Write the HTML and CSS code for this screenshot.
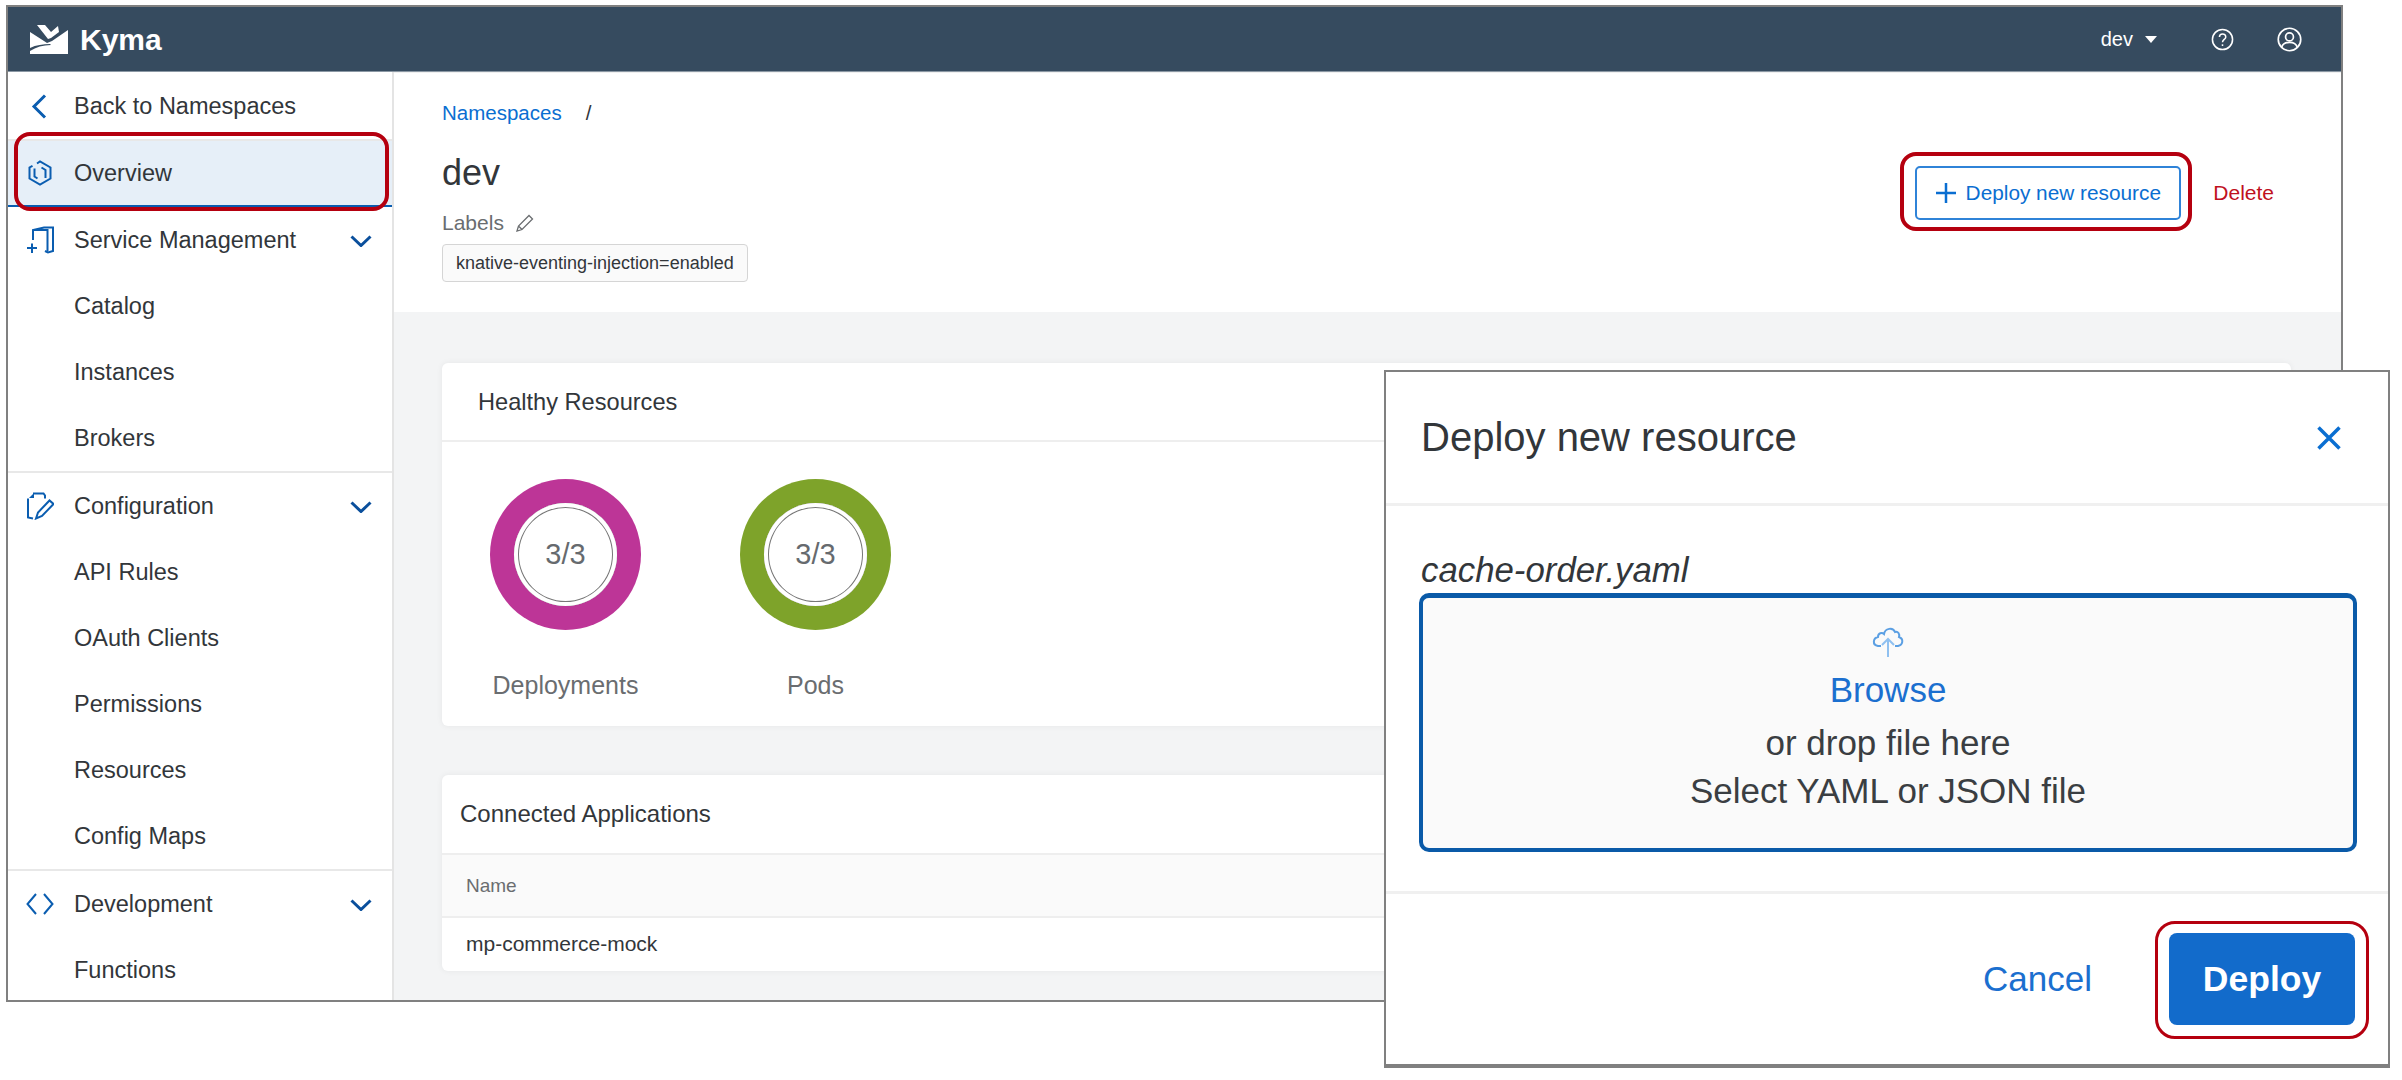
FILE: index.html
```html
<!DOCTYPE html>
<html>

<head>
    <meta charset="UTF-8">
    <title>Kyma</title>
    <link rel="stylesheet" href="styles.css">
</head>

<body>
    <div class="app">
        <header class="topbar">
            <div class="brand">
                <svg class="logo" viewBox="0 0 38 30">
                    <path fill="#fff" d="M7 1l8 0 6 7 7-6 1 6-8 6-3 1z"/>
                    <path fill="#fff" d="M0 8l14 9 3 2 5-2L38 6v24H0v-3c6-4 13-6 21-6l-1-1C13 20 6 21 0 24z"/>
                </svg>
                <span class="brand-name">Kyma</span>
            </div>
            <div class="topbar-right">
                <span class="ns-select">dev<i class="caret"></i></span>
                <svg class="top-icon help" viewBox="0 0 24 24">
                    <circle cx="12" cy="12" r="10.5"/>
                    <path d="M8.8 9.5c0-4.3 6.6-4.3 6.6-.2 0 2.600-3.400 2.700-3.400 5.600"/>
                    <path d="M12 17v1.800"/>
                </svg>
                <svg class="top-icon user" viewBox="0 0 24 24">
                    <circle cx="12" cy="12" r="10.8"/>
                    <circle cx="12" cy="9.500" r="3.800"/>
                    <path d="M4.500 19.500c1-3.600 4-4.800 7.500-4.800s6.500 1.200 7.500 4.800"/>
                </svg>
            </div>
        </header>

        <div class="columns">
            <nav class="sidebar">
                <div class="group">
                    <a class="row">
                        <svg class="nav-icon back" viewBox="0 0 28 28"><path d="M19 3.500L8 14.500l11 11"/></svg>
                        Back to Namespaces
                    </a>
                    <a class="row active">
                        <svg class="nav-icon" viewBox="0 0 28 28">
                            <path d="M11 4.500L14 2.500l10.500 6v11L14 25.500l-10.500-6v-11l3-1.700"/>
                            <path d="M8.500 9.500v8l3 2M19.500 19v-8l-4-2.500"/>
                        </svg>
                        Overview
                        <span class="callout callout-overview"></span>
                    </a>
                    <a class="row">
                        <svg class="nav-icon" viewBox="0 0 28 28">
                            <path d="M7 14V4l11-2.500h1.500L27 1.500V25l-5 1.500-3-1.500"/>
                            <path d="M7 4h14.500v21"/>
                            <path d="M1 22h10M6 17.500V27"/>
                        </svg>
                        Service Management
                        <svg class="chev" viewBox="0 0 22 12"><path d="M1.500 1.500L11 10.500l9.500-9"/></svg>
                    </a>
                    <a class="row sub">Catalog</a>
                    <a class="row sub">Instances</a>
                    <a class="row sub">Brokers</a>
                </div>
                <div class="group">
                    <a class="row">
                        <svg class="nav-icon" viewBox="0 0 28 28">
                            <path d="M7 1.500h10.500l1.500 2v3"/>
                            <path d="M2 6.500v19l5 1"/>
                            <path fill="#0a5db0" stroke="none" d="M3 6l5-5v5z"/>
                            <path d="M10 26.500l2-6L23.500 8.500l4 3.500L16 24z"/>
                        </svg>
                        Configuration
                        <svg class="chev" viewBox="0 0 22 12"><path d="M1.500 1.500L11 10.500l9.500-9"/></svg>
                    </a>
                    <a class="row sub">API Rules</a>
                    <a class="row sub">OAuth Clients</a>
                    <a class="row sub">Permissions</a>
                    <a class="row sub">Resources</a>
                    <a class="row sub">Config Maps</a>
                </div>
                <div class="group">
                    <a class="row">
                        <svg class="nav-icon" viewBox="0 0 28 28">
                            <path d="M10 4L1.500 14 10 24M18 4l8.500 10L18 24"/>
                        </svg>
                        Development
                        <svg class="chev" viewBox="0 0 22 12"><path d="M1.500 1.500L11 10.500l9.500-9"/></svg>
                    </a>
                    <a class="row sub">Functions</a>
                </div>
            </nav>

            <main class="content">
                <section class="page-head">
                    <div>
                        <div class="crumbs"><a>Namespaces</a><span class="slash">/</span></div>
                        <h1 class="ns-title">dev</h1>
                        <div class="labels">
                            Labels
                            <svg class="pencil" viewBox="0 0 20 20">
                                <path d="M2 18l1.500-5L14 2.500l3.500 3.500L7 16.500zM3.500 13L7 16.500"/>
                            </svg>
                        </div>
                        <span class="tag">knative-eventing-injection=enabled</span>
                    </div>
                    <div class="actions">
                        <button class="btn-outline">
                            <svg class="plus" viewBox="0 0 20 20"><path d="M10 0v20M0 10h20"/></svg>
                            Deploy new resource
                            <span class="callout callout-deploy"></span>
                        </button>
                        <a class="delete">Delete</a>
                    </div>
                </section>

                <section class="card health">
                    <div class="card-head">Healthy Resources</div>
                    <div class="donuts">
                        <div class="donut-item">
                            <div class="donut magenta"><span class="donut-hole">3/3</span></div>
                            <div class="donut-label">Deployments</div>
                        </div>
                        <div class="donut-item">
                            <div class="donut green"><span class="donut-hole">3/3</span></div>
                            <div class="donut-label">Pods</div>
                        </div>
                    </div>
                </section>

                <section class="card apps">
                    <div class="card-head apps-head">Connected Applications</div>
                    <table class="apps-table">
                        <tr><th>Name</th></tr>
                        <tr><td>mp-commerce-mock</td></tr>
                    </table>
                </section>
            </main>
        </div>
    </div>

    <div class="modal">
        <div class="modal-head">
            <span>Deploy new resource</span>
            <svg class="close" viewBox="0 0 24 24"><path d="M1.500 1.500l21 21M22.500 1.500l-21 21"/></svg>
        </div>
        <div class="modal-body">
            <div class="file-name">cache-order.yaml</div>
            <div class="dropzone">
                <svg class="upload" viewBox="0 0 32 32">
                    <path d="M9 20H6c-6-1-5-8 0-9 0-4 4-5 6-3 1-6 9-7 11-2 3-1 5 2 4 5 5 2 4 8-1 9h-3"/>
                    <path class="upload-arrow" d="M16 31V13M10 19l6-6 6 6"/>
                </svg>
                <a class="browse">Browse</a>
                <div class="drop-text drop-first">or drop file here</div>
                <div class="drop-text">Select YAML or JSON file</div>
            </div>
        </div>
        <div class="modal-foot">
            <a class="cancel">Cancel</a>
            <button class="btn-primary">
                Deploy
                <span class="callout callout-primary"></span>
            </button>
        </div>
    </div>
</body>
</html>
```

FILE: styles.css
```css
* {
    box-sizing: border-box;
    font-family: "Liberation Sans", Arial, sans-serif;
}
body {
    margin: 0;
    background: #fff;
    color: #32363a;
}
.app {
    width: 2337px;
    height: 997px;
    margin: 5px 0 0 6px;
    border: 2px solid #808080;
    overflow: hidden;
}
.topbar {
    height: 65px;
    display: flex;
    align-items: center;
    justify-content: space-between;
    background: #364b5f;
    border-bottom: 1px solid #8b98a4;
    color: #fff;
}
.brand {
    display: flex;
    align-items: center;
    margin-left: 22px;
}
.logo {
    width: 38px;
    height: 30px;
}
.brand-name {
    margin: 2px 0 0 12px;
    font-size: 30px;
    font-weight: bold;
}
.topbar-right {
    display: flex;
    align-items: center;
    margin-right: 39px;
}
.ns-select {
    font-size: 20px;
    display: flex;
    align-items: center;
}
.caret {
    width: 0;
    height: 0;
    margin-left: 12px;
    border-left: 6px solid transparent;
    border-right: 6px solid transparent;
    border-top: 7px solid #fff;
}
.top-icon {
    fill: none;
    stroke: #fff;
    stroke-width: 1.600;
}
.help {
    width: 23px;
    height: 23px;
    margin-left: 54px;
}
.user {
    width: 25px;
    height: 25px;
    margin-left: 43px;
}
.columns {
    display: flex;
    height: 930px;
}
.sidebar {
    width: 386px;
    flex-shrink: 0;
    padding-top: 1px;
    background: #fff;
    border-right: 2px solid #e4e4e4;
}
.group {
    border-bottom: 2px solid #e8e8e8;
}
.group:last-child {
    border-bottom: 0;
}
.row {
    position: relative;
    height: 66px;
    display: flex;
    align-items: center;
    padding-left: 18px;
    font-size: 23.500px;
    color: #32363a;
}
.sub {
    padding-left: 66px;
}
.active {
    height: 68px;
    background: #e6eff8;
    border-top: 2px solid #e8e8e8;
    border-bottom: 2px solid #0a5db0;
}
.nav-icon {
    width: 28px;
    height: 28px;
    margin-right: 20px;
    fill: none;
    stroke: #0a5db0;
    stroke-width: 2;
}
.back {
    stroke-width: 3;
}
.chev {
    position: absolute;
    right: 20px;
    top: 28px;
    width: 22px;
    height: 12px;
    fill: none;
    stroke: #0a4f9c;
    stroke-width: 3;
}
.callout {
    position: absolute;
    border: 4px solid #b5000f;
    border-radius: 16px;
    pointer-events: none;
}
.callout-overview {
    top: -9px;
    bottom: -6px;
    left: 6px;
    right: 3px;
}
.callout-deploy {
    top: -16px;
    bottom: -13px;
    left: -17px;
    right: -13px;
}
.callout-primary {
    top: -12px;
    bottom: -14px;
    left: -14px;
    right: -14px;
    border-width: 3px;
    border-radius: 20px;
}
.content {
    flex: 1;
    background: #f3f4f5;
}
.page-head {
    height: 240px;
    padding: 26px 67px 0 48px;
    display: flex;
    justify-content: space-between;
    background: #fff;
    border-top: 1px solid #f0f0f0;
}
.crumbs {
    height: 28px;
    line-height: 28px;
    font-size: 20.500px;
}
.crumbs a {
    color: #0a6ed1;
}
.slash {
    margin-left: 24px;
}
.ns-title {
    margin: 24px 0 0;
    height: 44px;
    line-height: 44px;
    font-size: 36px;
    font-weight: normal;
}
.labels {
    margin-top: 14px;
    height: 28px;
    display: flex;
    align-items: center;
    font-size: 21px;
    color: #6a6d70;
}
.pencil {
    width: 20px;
    height: 20px;
    margin-left: 11px;
    fill: none;
    stroke: #6a6d70;
    stroke-width: 1.300;
}
.tag {
    display: inline-block;
    margin-top: 7px;
    height: 38px;
    line-height: 36px;
    padding: 0 13px;
    border: 1px solid #d5d5d5;
    border-radius: 4px;
    background: #fafafa;
    font-size: 18px;
}
.actions {
    display: flex;
    align-items: center;
    height: 188px;
}
.btn-outline {
    position: relative;
    width: 266px;
    height: 54px;
    display: flex;
    align-items: center;
    justify-content: center;
    border: 2px solid #2f83d8;
    border-radius: 5px;
    background: #fff;
    color: #0a6ed1;
    font-size: 20.800px;
}
.plus {
    width: 20px;
    height: 20px;
    margin-right: 10px;
    fill: none;
    stroke: #0a6ed1;
    stroke-width: 2.500;
}
.delete {
    margin-left: 32px;
    font-size: 21px;
    color: #c0101e;
}
.card {
    background: #fff;
    border-radius: 6px;
    margin-right: 50px;
    margin-left: 48px;
    box-shadow: 0 0 6px rgba(0, 0, 0, 0.06);
}
.card-head {
    height: 79px;
    line-height: 78px;
    padding-left: 36px;
    font-size: 23.600px;
    border-bottom: 2px solid #eeeeee;
}
.health {
    height: 363px;
    margin-top: 51px;
}
.donuts {
    display: flex;
    gap: 99px;
    padding: 37px 0 0 48px;
}
.donut-item {
    width: 151px;
    text-align: center;
}
.donut {
    width: 151px;
    height: 151px;
    display: flex;
    align-items: center;
    justify-content: center;
    border-radius: 50%;
}
.magenta {
    background: #bd3597;
}
.green {
    background: #7ea32a;
}
.donut-hole {
    width: 103px;
    height: 103px;
    display: flex;
    align-items: center;
    justify-content: center;
    border-radius: 50%;
    background: #fff;
    font-size: 29px;
    color: #666a6e;
    box-shadow: inset 0 0 0 4px #fff, inset 0 0 0 5px #777;
}
.donut-label {
    margin-top: 40px;
    line-height: 30px;
    font-size: 25px;
    color: #6a6d70;
    white-space: nowrap;
    display: flex;
    justify-content: center;
}
.apps {
    height: 196px;
    margin-top: 49px;
}
.apps-head {
    height: 80px;
    padding-left: 18px;
    font-size: 24px;
}
.apps-table {
    width: 100%;
    border-collapse: collapse;
}
.apps-table th {
    height: 62px;
    padding-left: 24px;
    text-align: left;
    font-size: 19px;
    font-weight: normal;
    color: #6a6d70;
    background: #fafafa;
    border-bottom: 2px solid #eeeeee;
}
.apps-table td {
    height: 52px;
    padding-left: 24px;
    font-size: 21px;
}
.modal {
    position: absolute;
    left: 1384px;
    top: 370px;
    width: 1006px;
    height: 698px;
    background: #fff;
    border: 2px solid #808080;
    border-bottom-width: 4px;
    display: flex;
    flex-direction: column;
}
.modal-head {
    height: 134px;
    flex-shrink: 0;
    padding: 0 47px 0 35px;
    display: flex;
    align-items: center;
    justify-content: space-between;
    border-bottom: 3px solid #f0f0f0;
    font-size: 40px;
}
.close {
    width: 24px;
    height: 24px;
    fill: none;
    stroke: #0a6ed1;
    stroke-width: 3.500;
}
.modal-body {
    padding: 44px 31px 39px 33px;
    border-bottom: 3px solid #f0f0f0;
}
.file-name {
    height: 42px;
    line-height: 40px;
    margin-left: 2px;
    font-size: 34.800px;
    font-style: italic;
}
.dropzone {
    height: 259px;
    margin-top: 1px;
    display: flex;
    flex-direction: column;
    align-items: center;
    padding-top: 28px;
    border: 4px solid #0a5aa8;
    border-top-width: 5px;
    border-radius: 10px;
    background: #fafafa;
    font-size: 35px;
}
.upload {
    width: 32px;
    height: 32px;
    fill: none;
    stroke: #5b9fe3;
    stroke-width: 2;
}
.upload-arrow {
    stroke: #8fc0f0;
}
.browse {
    margin-top: 8px;
    height: 48px;
    line-height: 48px;
    color: #1b6fcf;
}
.drop-text {
    height: 48px;
    line-height: 48px;
    color: #3a3e42;
}
.drop-first {
    margin-top: 5px;
}
.modal-foot {
    flex: 1;
    display: flex;
    align-items: center;
    justify-content: flex-end;
    padding-right: 33px;
    font-size: 35px;
}
.cancel {
    margin-right: 77px;
    color: #1b6fcf;
}
.btn-primary {
    position: relative;
    width: 186px;
    height: 92px;
    border: 0;
    border-radius: 8px;
    background: #126bcb;
    color: #fff;
    font-size: 35.500px;
    font-weight: bold;
}
```
